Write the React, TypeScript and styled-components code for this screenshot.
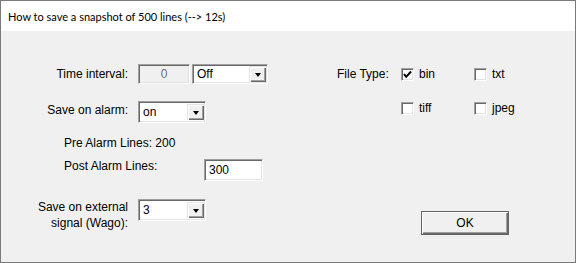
import styled, { createGlobalStyle } from 'styled-components';

const Global = createGlobalStyle`
    html, body {
        margin: 0;
        padding: 0;
        background: #f0f0f0;
    }
    * {
        box-sizing: border-box;
    }
`;

const Window = styled.div`
    width: 576px;
    height: 263px;
    border: 1px solid #7a7a7a;
    background: #f0f0f0;
    display: flex;
    flex-direction: column;
    font-family: 'Liberation Sans', Arial, sans-serif;
    font-size: 12px;
    color: #000;
`;

const TitleBar = styled.div`
    height: 30px;
    background: #fff;
    display: flex;
    align-items: center;
    padding-left: 7px;
    font-family: Lato, 'Noto Sans', sans-serif;
    font-size: 11px;
    color: #000;
`;

const Body = styled.div`
    flex: 1;
    display: flex;
    padding: 33px 0 0 34px;
`;

const LeftColumn = styled.div`
    width: 302px;
    display: flex;
    flex-direction: column;
`;

const Row = styled.div<{ $top: number; $indent?: number }>`
    display: flex;
    align-items: flex-start;
    gap: 10px;
    margin-top: ${(p) => p.$top}px;
    padding-left: ${(p) => p.$indent ?? 0}px;
`;

const Label = styled.div<{ $pad?: number }>`
    width: 93px;
    text-align: right;
    white-space: nowrap;
    line-height: 16px;
    padding-top: ${(p) => p.$pad ?? 0}px;
`;

const PlainText = styled.div<{ $width?: number }>`
    width: ${(p) => (p.$width ? `${p.$width}px` : 'auto')};
    line-height: 14px;
`;

const Pair = styled.div`
    display: flex;
    gap: 2px;
`;

const Sunken = styled.div<{ $w: number; $h: number }>`
    width: ${(p) => p.$w}px;
    height: ${(p) => p.$h}px;
    border-top: 1px solid #a0a0a0;
    border-left: 1px solid #a0a0a0;
    border-right: 1px solid #fff;
    border-bottom: 1px solid #fff;
    box-shadow: inset 1px 1px 0 #696969, inset -1px -1px 0 #e3e3e3;
    background: #fff;
    display: flex;
    align-items: center;
`;

const DisabledBox = styled(Sunken)`
    background: #f0f0f0;
    justify-content: center;
    color: #6d6d6d;
`;

const Value = styled.span`
    flex: 1;
    padding-left: 4px;
    line-height: 14px;
`;

const ArrowBtn = styled.div`
    width: 17px;
    height: 16px;
    margin-right: 1px;
    background: #f0f0f0;
    box-shadow: inset 1px 1px 0 #e3e3e3, inset 2px 2px 0 #fff, inset -1px -1px 0 #696969, inset -2px -2px 0 #a0a0a0;
    display: flex;
    align-items: center;
    justify-content: center;
`;

const Arrow = styled.div`
    width: 0;
    height: 0;
    border-left: 3.5px solid transparent;
    border-right: 3.5px solid transparent;
    border-top: 4px solid #000;
    margin-top: 1px;
`;

const RightColumn = styled.div`
    display: flex;
    flex-direction: column;
`;

const FileGrid = styled.div`
    display: grid;
    grid-template-columns: 64px 73px 60px;
    grid-template-rows: 20px 20px;
    row-gap: 14px;
    align-items: center;
`;

const CheckItem = styled.label`
    display: flex;
    align-items: center;
    gap: 5px;
    line-height: 14px;
`;

const Box = styled.span`
    width: 13px;
    height: 13px;
    background: #fff;
    border-top: 1px solid #a0a0a0;
    border-left: 1px solid #a0a0a0;
    border-right: 1px solid #fff;
    border-bottom: 1px solid #fff;
    box-shadow: inset 1px 1px 0 #696969, inset -1px -1px 0 #e3e3e3;
    display: flex;
    align-items: center;
    justify-content: center;
`;

const OkButton = styled.button`
    margin-top: 93px;
    margin-left: 84px;
    width: 88px;
    height: 24px;
    background: #f0f0f0;
    border: 1px solid #646464;
    box-shadow: inset 1px 1px 0 #fff, inset -1px -1px 0 #696969, inset -2px -2px 0 #a0a0a0;
    font-family: 'Liberation Sans', Arial, sans-serif;
    font-size: 12px;
    color: #000;
    padding: 0;
`;

function DropArrow() {
    return (
        <ArrowBtn>
            <Arrow />
        </ArrowBtn>
    );
}

function Select({ value, width, height = 22 }: { value: string; width: number; height?: number }) {
    return (
        <Sunken $w={width} $h={height}>
            <Value>{value}</Value>
            <DropArrow />
        </Sunken>
    );
}

function Check({ label, checked }: { label: string; checked?: boolean }) {
    return (
        <CheckItem>
            <Box>
                {checked ? (
                    <svg width="9" height="9" viewBox="0 0 9 9">
                        <path d="M1 4 L3.2 6.8 L8 1.5" stroke="#000" strokeWidth="2" fill="none" />
                    </svg>
                ) : null}
            </Box>
            {label}
        </CheckItem>
    );
}

export default function App() {
    return (
        <>
            <Global />
            <Window>
                <TitleBar>How to save a snapshot of 500 lines (--&gt; 12s)</TitleBar>
                <Body>
                    <LeftColumn>
                        <Row $top={0}>
                            <Label $pad={2}>Time interval:</Label>
                            <Pair>
                                <DisabledBox $w={52} $h={20}>0</DisabledBox>
                                <Select value="Off" width={76} height={20} />
                            </Pair>
                        </Row>
                        <Row $top={17}>
                            <Label $pad={1}>Save on alarm:</Label>
                            <Select value="on" width={68} />
                        </Row>
                        <Row $top={13} $indent={29}>
                            <PlainText>Pre Alarm Lines: 200</PlainText>
                        </Row>
                        <Row $top={9} $indent={29}>
                            <PlainText $width={130}>Post Alarm Lines:</PlainText>
                            <Sunken $w={59} $h={22}>
                                <Value>300</Value>
                            </Sunken>
                        </Row>
                        <Row $top={18}>
                            <Label>
                                Save on external
                                <br />
                                signal (Wago):
                            </Label>
                            <Select value="3" width={68} />
                        </Row>
                    </LeftColumn>
                    <RightColumn>
                        <FileGrid>
                            <span>File Type:</span>
                            <Check label="bin" checked />
                            <Check label="txt" />
                            <span />
                            <Check label="tiff" />
                            <Check label="jpeg" />
                        </FileGrid>
                        <OkButton>OK</OkButton>
                    </RightColumn>
                </Body>
            </Window>
        </>
    );
}
